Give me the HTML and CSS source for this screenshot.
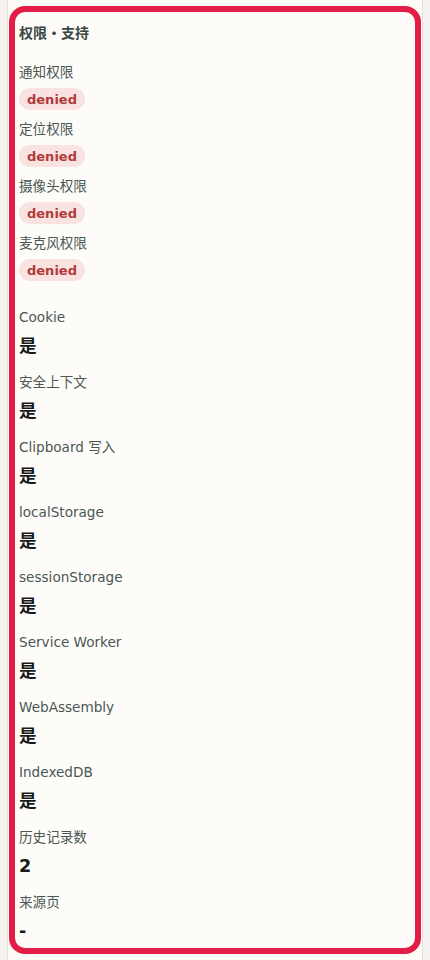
FILE: index.html
```html
<!DOCTYPE html>
<html lang="zh-CN">
<head>
<meta charset="utf-8">
<title>权限・支持</title>
<link rel="stylesheet" href="styles.css">
</head>
<body>
<div class="panel">
  <section class="card">
    <h2 class="title">权限・支持</h2>
    <div class="perms">
      <div class="perm"><span class="label">通知权限</span><span class="badge">denied</span></div>
      <div class="perm"><span class="label">定位权限</span><span class="badge">denied</span></div>
      <div class="perm"><span class="label">摄像头权限</span><span class="badge">denied</span></div>
      <div class="perm"><span class="label">麦克风权限</span><span class="badge">denied</span></div>
    </div>
    <div class="supports">
      <div class="item"><span class="label">Cookie</span><span class="value">是</span></div>
      <div class="item"><span class="label">安全上下文</span><span class="value">是</span></div>
      <div class="item"><span class="label">Clipboard 写入</span><span class="value">是</span></div>
      <div class="item"><span class="label">localStorage</span><span class="value">是</span></div>
      <div class="item"><span class="label">sessionStorage</span><span class="value">是</span></div>
      <div class="item"><span class="label">Service Worker</span><span class="value">是</span></div>
      <div class="item"><span class="label">WebAssembly</span><span class="value">是</span></div>
      <div class="item"><span class="label">IndexedDB</span><span class="value">是</span></div>
      <div class="item"><span class="label">历史记录数</span><span class="value">2</span></div>
      <div class="item"><span class="label">来源页</span><span class="value">-</span></div>
    </div>
  </section>
</div>
</body>
</html>
```

FILE: styles.css
```css
html, body {
  margin: 0;
  padding: 0;
}
body {
  background: #f4f3ef;
  font-family: "DejaVu Sans", "Noto Sans CJK SC", sans-serif;
  height: 960px;
  overflow: hidden;
}
.panel {
  margin: 0 7px;
  height: 960px;
  box-sizing: border-box;
  border-left: 1px solid #e2e0d9;
  border-right: 1px solid #e2e0d9;
  background: #fcfbf7;
  padding: 6px 1px;
}
.card {
  box-sizing: border-box;
  height: 948px;
  border: 6px solid #e11d48;
  border-radius: 16px;
  background: #fdfcf8;
  padding: 11px 4px 5px 4px;
  display: flex;
  flex-direction: column;
}
.title {
  margin: 0;
  font-size: 14px;
  line-height: 20px;
  font-weight: 700;
  color: #3a4542;
}
.perms {
  margin-top: 19px;
  display: flex;
  flex-direction: column;
  gap: 9px;
}
.perm {
  display: flex;
  flex-direction: column;
  align-items: flex-start;
  gap: 6px;
}
.label {
  font-size: 13.6px;
  line-height: 20px;
  color: #4b5755;
}
.badge {
  display: inline-flex;
  align-items: center;
  height: 22px;
  padding: 0 8px;
  border-radius: 11px;
  background: #f9e3e1;
  color: #b23a3b;
  font-size: 13px;
  font-weight: 700;
}
.supports {
  margin-top: 26px;
  display: flex;
  flex-direction: column;
  gap: 14px;
}
.item {
  display: flex;
  flex-direction: column;
  gap: 7px;
}
.value {
  font-size: 17.6px;
  line-height: 24px;
  font-weight: 700;
  color: #151a19;
}
```
